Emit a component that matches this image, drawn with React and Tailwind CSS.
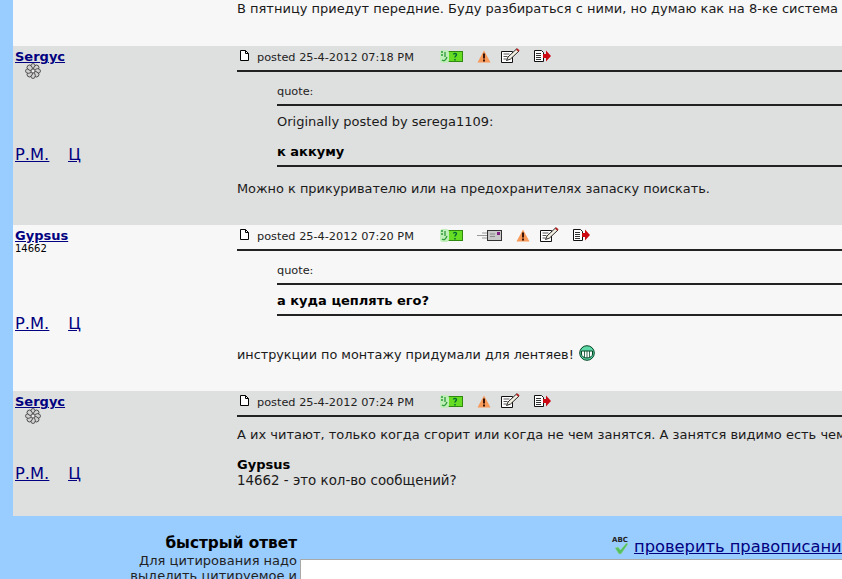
const FONT = 'font-["DejaVu_Sans",Verdana,sans-serif]'

function PageIcon() {
  return (
    <svg width="9" height="11" viewBox="0 0 9 11" className="block">
      <path d="M0.500 0.500h5l3 3v7h-8z" fill="#fff" stroke="#000" />
      <path d="M5.500 0.500v3h3" fill="none" stroke="#000" />
    </svg>
  )
}

function OnlineIcon() {
  return (
    <svg width="23" height="13" viewBox="0 0 23 13" className="block">
      <rect x="8.500" y="1.500" width="14" height="10" fill="#66dd22" stroke="#2f8a10" />
      <rect x="0" y="0" width="9" height="13" rx="3" fill="#bfeeb8" />
      <path d="M1 2h2M5 2v5M2 10c2 1.500 4 0 5-3M1 5h2" stroke="#2f9a3a" strokeWidth="1.300" fill="none" />
      <path d="M13.500 4.500c0-1.500 3-1.500 3 0 0 1.500-1.500 1.500-1.500 3M15 9v1.500" stroke="#063" strokeWidth="1.400" fill="none" />
    </svg>
  )
}

function MailIcon() {
  return (
    <svg width="25" height="12" viewBox="0 0 25 12" className="block">
      <path d="M5 4h5M0 6.500h10M5 9h5" stroke="#999" />
      <rect x="10.500" y="1.500" width="14" height="10" fill="#c8c8c8" stroke="#333" />
      <path d="M13 5h5M13 7.500h5" stroke="#888" />
      <rect x="20" y="3" width="3" height="3" fill="#802080" />
    </svg>
  )
}

function WarnIcon() {
  return (
    <svg width="14" height="13" viewBox="0 0 14 13" className="block">
      <path d="M7 0.500l6.500 12h-13z" fill="#f79a5a" />
      <path d="M7 3.500v5M7 9.500v2" stroke="#3a1408" strokeWidth="2" />
    </svg>
  )
}

function EditIcon() {
  return (
    <svg width="19" height="15" viewBox="0 0 19 15" className="block">
      <path d="M0.500 3.500h11v11h-11z" fill="#fff" stroke="#111" />
      <path d="M2.500 6h6M2.500 8.500h4M2.500 11h3" stroke="#555" />
      <path d="M5.500 12.500l1.500-3.500 8.500-8 2.500 2-8.500 8z" fill="#f4f0e4" stroke="#111" strokeWidth="0.900" />
      <path d="M15.500 1l2.500 2" stroke="#b02020" strokeWidth="1.800" />
    </svg>
  )
}

function QuoteIcon() {
  return (
    <svg width="17" height="12" viewBox="0 0 17 12" className="block">
      <path d="M0.500 0.500h7l2 2v9h-9z" fill="#fff" stroke="#111" />
      <path d="M2 3.500h5M2 5.500h5M2 7.500h5M2 9.500h5" stroke="#333" />
      <path d="M9 4h3v-3.500l5 5.500-5 5.500v-3.500h-3z" fill="#cc0a14" />
    </svg>
  )
}

function FlowerIcon() {
  const angles = [0, 45, 90, 135, 180, 225, 270, 315]
  return (
    <svg width="16" height="16" viewBox="0 0 16 16" className="block">
      {angles.map((a) => (
        <ellipse key={a} cx="8" cy="3.400" rx="2.300" ry="2.900" fill="#d2d2d2" stroke="#333" strokeWidth="0.800" transform={`rotate(${a} 8 8)`} />
      ))}
      <circle cx="8" cy="8" r="1.800" fill="#eee" stroke="#555" strokeWidth="0.600" />
    </svg>
  )
}

function GrinIcon() {
  return (
    <svg width="16" height="16" viewBox="0 0 16 16" className="block">
      <circle cx="8" cy="8" r="7.300" fill="#5fd8a8" stroke="#042" />
      <path d="M2.500 6h11v3c0 2.200-2.200 4-5.500 4s-5.500-1.800-5.500-4z" fill="#fff" stroke="#042" />
      <path d="M5.500 6v6.500M8 6v7M10.500 6v6.500" stroke="#042" strokeWidth="0.800" />
    </svg>
  )
}

function SpellIcon() {
  return (
    <div className="relative w-[18px] h-[20px]">
      <span className="absolute left-0 top-0 text-[7px] leading-[8px] font-bold text-[#222]">ABC</span>
      <svg width="18" height="14" viewBox="0 0 18 14" className="absolute left-0 top-[6px]">
        <path d="M3 6l3-1 2.500 3 6-7 1.500 1-7 10h-2z" fill="#55c060" stroke="#9ad8a0" strokeWidth="0.500" />
      </svg>
    </div>
  )
}

function Author({ name, extra, flower, linksClass }) {
  return (
    <div className="w-[224px] shrink-0 pl-[2px] flex flex-col">
      <a className="text-[13px] leading-[15px] mt-[3px] font-bold text-[#000080] underline self-start">{name}</a>
      {flower && <div className="ml-[10px] mt-[-1px]"><FlowerIcon /></div>}
      {extra && <div className="text-[10px] leading-[10px] mt-[1px] text-black">{extra}</div>}
      <div className={`flex gap-[19px] text-[16.300px] leading-[20px] text-[#000080] underline ${linksClass}`}>
        <a>Р.М.</a>
        <a>Ц</a>
      </div>
    </div>
  )
}

function PostHead({ date, mail }) {
  return (
    <div className="border-b-2 border-[#222] h-[26px] flex items-start pt-[4px]">
      <div className="w-[20px] pl-[3px]"><PageIcon /></div>
      <span className="text-[11.300px] leading-[14px] mt-[1px] w-[183px] text-[#222]">posted {date}</span>
      <div className="mr-[14px]"><OnlineIcon /></div>
      {mail && <div className="mr-[14px]"><MailIcon /></div>}
      <div className="mr-[10px]"><WarnIcon /></div>
      <div className="mr-[14px] mt-[-2px]"><EditIcon /></div>
      <QuoteIcon />
    </div>
  )
}

function Quote({ children }) {
  return (
    <div className="ml-[40px]">
      <div className="h-[34px] pt-[13px] border-b-2 border-[#222] text-[11.300px] leading-[14px] text-[#222]">quote:</div>
      {children}
      <div className="border-b-2 border-[#222]" />
    </div>
  )
}

export default function App() {
  return (
    <div className={`h-[579px] w-[842px] overflow-hidden bg-[#99ccff] pl-[13px] text-[13px] text-[#1a1a1a] ${FONT}`}>
      <div className="h-[46px] bg-[#f7f7f7] pl-[224px] overflow-hidden">
        <div className="whitespace-nowrap leading-[16px] pt-[1px]">В пятницу приедут передние. Буду разбираться с ними, но думаю как на 8-ке система</div>
      </div>

      <div className="h-[179px] bg-[#dedfdf] flex">
        <Author name="Sergyc" flower linksClass="mt-[66px]" />
        <div className="flex-1 min-w-0">
          <PostHead date="25-4-2012 07:18 PM" />
          <Quote>
            <div className="leading-[16px] pt-[8px] h-[32px]">Originally posted by serega1109:</div>
            <div className="leading-[16px] pt-[6px] h-[27px] font-bold text-black">к аккуму</div>
          </Quote>
          <div className="text-[12.900px] leading-[16px] mt-[14px]">Можно к прикуривателю или на предохранителях запаску поискать.</div>
        </div>
      </div>

      <div className="h-[166px] bg-[#f7f7f7] flex">
        <Author name="Gypsus" extra="14662" linksClass="mt-[60px]" />
        <div className="flex-1 min-w-0">
          <PostHead date="25-4-2012 07:20 PM" mail />
          <Quote>
            <div className="leading-[16px] pt-[8px] h-[29px] font-bold text-black">а куда цеплять его?</div>
          </Quote>
          <div className="text-[12.800px] mt-[31px] flex items-start leading-[16px]">
            инструкции по монтажу придумали для лентяев!
            <span className="ml-[5px] mt-[-2px]"><GrinIcon /></span>
          </div>
        </div>
      </div>

      <div className="h-[125px] bg-[#dedfdf] flex">
        <Author name="Sergyc" flower linksClass="mt-[40px]" />
        <div className="flex-1 min-w-0">
          <PostHead date="25-4-2012 07:24 PM" />
          <div className="leading-[16px] mt-[10px] whitespace-nowrap">А их читают, только когда сгорит или когда не чем занятся. А занятся видимо есть чем</div>
          <div className="leading-[16px] mt-[14px] font-bold text-black">Gypsus</div>
          <div className="text-[13.400px] leading-[16px]">14662 - это кол-во сообщений?</div>
        </div>
      </div>

      <div className="flex mt-[17px]">
        <div className="w-[288px] shrink-0 text-right">
          <div className="text-[15.300px] leading-[19px] font-bold text-black mr-[4px] mt-[1px]">быстрый ответ</div>
          <div className="text-[13px] leading-[15px] mr-[4px] text-[#222]">Для цитирования надо<br />выделить цитируемое и</div>
        </div>
        <div className="flex-1 min-w-0 ml-[-1px]">
          <div className="flex items-start h-[26px] pl-[312px] whitespace-nowrap">
            <span className="mr-[4px] mt-[3px]"><SpellIcon /></span>
            <a className="text-[16.300px] leading-[19px] mt-[4px] text-[#000080] underline">проверить правописание</a>
          </div>
          <div className="h-[30px] bg-white border-t border-[#a9a9a9] border-l" />
        </div>
      </div>
    </div>
  )
}
